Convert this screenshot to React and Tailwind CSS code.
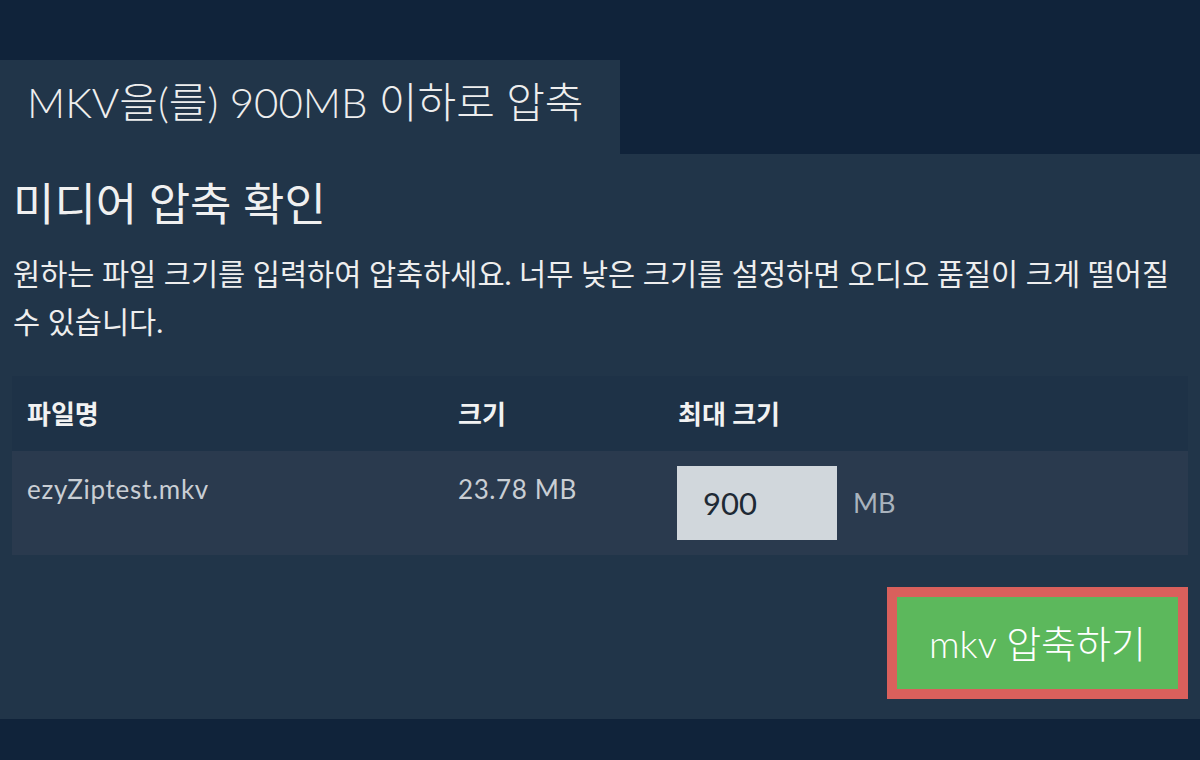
export default function App() {
  return (
    <div className="w-[1200px] h-[760px] bg-[#10233a] pt-[60px] font-['Lato','Noto_Sans_CJK_KR',sans-serif] overflow-hidden">
      <div className="w-[620px] h-[94px] bg-[#213549] pl-[27px] pb-[10px] flex items-center">
        <span className="text-[42px] font-light text-[#eeeeee] leading-none whitespace-nowrap">MKV을(를) 900MB 이하로 압축</span>
      </div>
      <div className="h-[565px] bg-[#213549] px-[12px] pt-[26px]">
        <h1 className="pl-[1px] text-[45px] leading-[48px] text-[#f0f0f0]">미디어 압축 확인</h1>
        <p className="mt-[22px] pl-[1px] text-[29.5px] leading-[48px] text-[#eeeeee] break-keep">
          원하는 파일 크기를 입력하여 압축하세요. 너무 낮은 크기를 설정하면 오디오 품질이 크게 떨어질 수 있습니다.
        </p>
        <div className="mt-[30px] w-[1176px]">
          <div className="grid grid-cols-[431px_220px_525px] h-[75px] bg-[#1e3247] items-center text-[26px] leading-[36px] font-bold text-[#f2f2f2]">
            <div className="pl-[15px]">파일명</div>
            <div className="pl-[15px]">크기</div>
            <div className="pl-[15px]">최대 크기</div>
          </div>
          <div className="grid grid-cols-[431px_220px_525px] h-[104px] bg-[#2a3a4e] text-[26px] text-[#c9ced4]">
            <div className="pl-[15px] pt-[20px] leading-[36px] tracking-[0.7px]">ezyZiptest.mkv</div>
            <div className="pl-[15px] pt-[20px] leading-[36px] tracking-[0.6px]">23.78 MB</div>
            <div className="pl-[14px] pt-[15px] flex items-center gap-[16px] self-start">
              <div className="w-[160px] h-[74px] bg-[#d1d7dc] pl-[26px] flex items-center text-[31px] text-[#1e2a35]">900</div>
              <span className="text-[27px] text-[#a9b3bd]">MB</span>
            </div>
          </div>
        </div>
        <div className="mt-[32px] flex justify-end">
          <button className="w-[301px] h-[112px] border-[10px] border-[#d9605c] bg-[#5cb85c] text-white text-[38px] font-light flex items-center justify-center">
            mkv 압축하기
          </button>
        </div>
      </div>
    </div>
  );
}
